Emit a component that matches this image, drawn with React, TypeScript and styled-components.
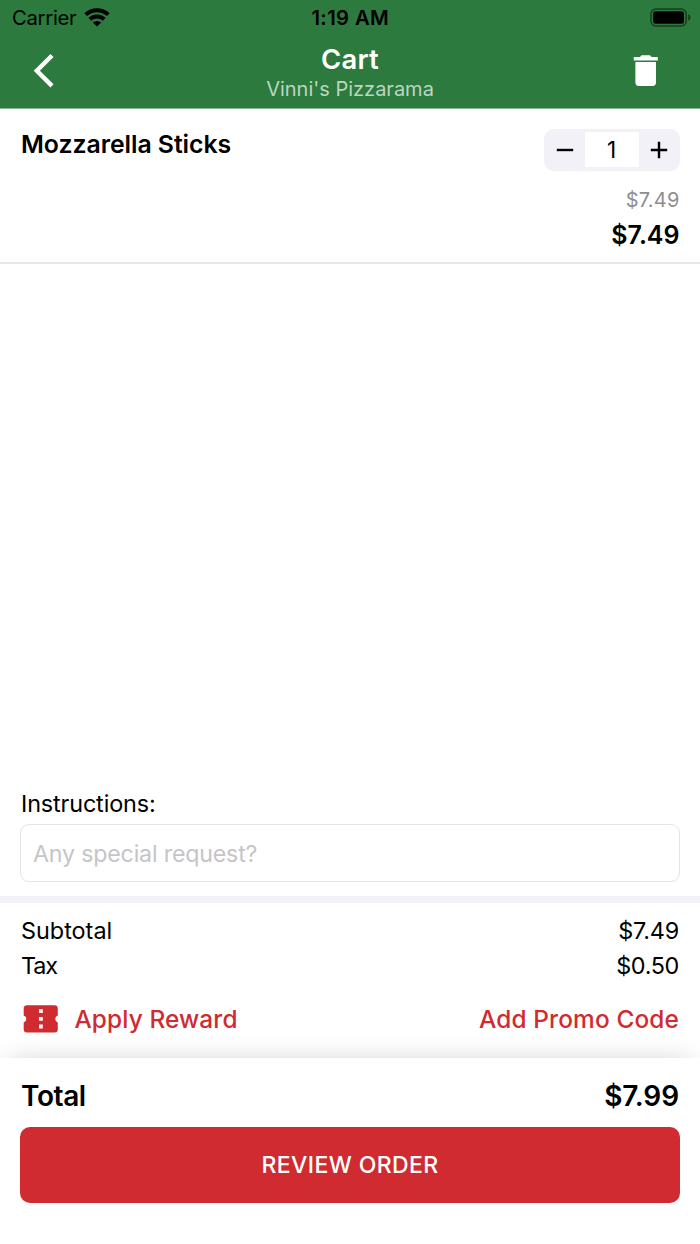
import React from "react";
import styled, { createGlobalStyle } from "styled-components";

const GlobalStyle = createGlobalStyle`
  * { box-sizing: border-box; }
  body {
    margin: 0;
    background: #fff;
    color: #000;
    font-family: Inter, "Liberation Sans", sans-serif;
  }
  button, input { font: inherit; color: inherit; border: 0; padding: 0; background: none; }
`;

const Screen = styled.div`
  display: flex;
  flex-direction: column;
  width: 700px;
  height: 1244px;
  overflow: hidden;
`;

const Text = styled.span<{ $size: number; $weight?: number; $spacing?: number; $color?: string; $line?: number }>`
  font-size: ${(p) => p.$size}px;
  font-weight: ${(p) => p.$weight ?? 400};
  letter-spacing: ${(p) => p.$spacing ?? 0}px;
  color: ${(p) => p.$color ?? "#000"};
  line-height: ${(p) => p.$line ?? 36}px;
  white-space: nowrap;
`;

const Header = styled.header`
  height: 109px;
  flex: none;
  background: #2c7a3d;
  border-bottom: 1px solid #8ab593;
`;

const StatusBar = styled.div`
  display: grid;
  grid-template-columns: 1fr auto 1fr;
  align-items: center;
  height: 36px;
  padding: 0 9px 0 12px;
`;

const Carrier = styled.div`
  display: flex;
  align-items: center;
  gap: 8px;
`;

const Time = styled.div`
  display: flex;
  padding-right: 2.5px;
`;

const WifiIcon = styled.svg`
  margin-bottom: 3px;
`;

const Battery = styled.div`
  display: flex;
  justify-content: flex-end;
  padding-bottom: 2px;
`;

const NavBar = styled.div`
  display: grid;
  grid-template-columns: 1fr auto 1fr;
  height: 72px;
`;

const Titles = styled.div`
  display: flex;
  flex-direction: column;
  align-items: center;
  padding-top: 5px;
`;

const IconButton = styled.button<{ $end?: boolean }>`
  display: flex;
  justify-self: ${(p) => (p.$end ? "end" : "start")};
  align-items: flex-start;
  padding: ${(p) => (p.$end ? "18px 41px 0 0" : "16px 0 0 32px")};
`;

const Item = styled.section`
  display: flex;
  justify-content: space-between;
  flex: none;
  height: 155px;
  padding: 19.7px 20.5px 0 21px;
  border-bottom: 2px solid #e8e8e9;
`;

const ItemName = styled.div`
  line-height: 0;
`;

const ItemSide = styled.div`
  display: flex;
  flex-direction: column;
  align-items: flex-end;
`;

const Stepper = styled.div`
  display: grid;
  grid-template-columns: 41px 54px 40.5px;
  height: 42px;
  margin-bottom: 11px;
  padding: 3.4px 0;
  border-radius: 10px;
  background: #f2f1f7;
`;

const StepButton = styled.button`
  display: flex;
  align-items: center;
  justify-content: center;
`;

const Count = styled.div`
  display: flex;
  align-items: center;
  justify-content: center;
  padding-right: 1px;
  background: #fff;
`;

const Instructions = styled.section`
  display: flex;
  flex-direction: column;
  flex: none;
  margin-top: auto;
  padding: 0 20px 13.5px;
  border-bottom: 7px solid #f2f1f7;
`;

const Label = styled.label`
  display: flex;
  padding-left: 1px;
`;

const Request = styled.input`
  height: 58px;
  margin-top: 2px;
  padding: 2px 12px 0;
  border: 1.5px solid #e4e4e6;
  border-radius: 9px;
  font-size: 23.2px;
  letter-spacing: -0.18px;
  outline: none;
  &::placeholder { color: #c5c5c7; opacity: 1; }
`;

const Summary = styled.section`
  flex: none;
  height: 155px;
  padding: 10px 21px 0;
`;

const Row = styled.div<{ $gap?: number }>`
  display: flex;
  align-items: center;
  justify-content: space-between;
  margin-top: ${(p) => p.$gap ?? 0}px;
`;

const LinkButton = styled.button`
  display: flex;
  align-items: center;
  gap: 16.4px;
`;

const Footer = styled.footer`
  flex: none;
  height: 186.3px;
  padding: 20px 20px 0;
  background: #fff;
  box-shadow: 0 -5px 26px -10px rgba(0, 0, 0, 0.22);
`;

const TotalRow = styled(Row)`
  padding: 0 1px;
`;

const ReviewButton = styled.button`
  display: block;
  width: 100%;
  height: 75.8px;
  margin-top: 13.5px;
  border-radius: 10px;
  background: #cf2b30;
`;

const red = "#cf2b30";

export default function App() {
  return (
    <Screen>
      <GlobalStyle />
      <Header>
        <StatusBar>
          <Carrier>
            <Text $size={20.3} $spacing={-0.3}>Carrier</Text>
            <WifiIcon width="26" height="20" viewBox="0 0 26 20">
              <g fill="none" stroke="#000" strokeWidth="4">
                <path d="M1.7 7.6 A16.7 16.7 0 0 1 24.3 7.6" />
                <path d="M5.8 12.2 A10.6 10.6 0 0 1 20.2 12.2" />
              </g>
              <path d="M13 19.4 L8.8 15.5 A6.4 6.4 0 0 1 17.2 15.5 Z" />
            </WifiIcon>
          </Carrier>
          <Time><Text $size={20.3} $weight={600} $spacing={0.35}>1:19 AM</Text></Time>
          <Battery>
            <svg width="41" height="19" viewBox="0 0 41 19">
              <rect x="1" y="1" width="35.2" height="17" rx="5" fill="none" stroke="#000" strokeOpacity=".5" strokeWidth="1.5" />
              <rect x="3.2" y="3.2" width="30.8" height="12.6" rx="2.4" />
              <path d="M38.2 6.3 C41.2 7.4 41.2 11.6 38.2 12.7 Z" fillOpacity=".5" />
            </svg>
          </Battery>
        </StatusBar>
        <NavBar>
          <IconButton aria-label="Back">
            <svg width="24" height="38" viewBox="0 0 24 38" fill="none" stroke="#fff" strokeWidth="4.4">
              <path d="M20 3.5 L4.8 18.7 L20 33.9" />
            </svg>
          </IconButton>
          <Titles>
            <Text $size={27.4} $weight={600} $spacing={0.3} $color="#fff">Cart</Text>
            <Text $size={20} $color="#bbd6c0" $line={24}>Vinni's Pizzarama</Text>
          </Titles>
          <IconButton $end aria-label="Empty cart">
            <svg width="26" height="33" viewBox="0 0 26 33" fill="#fff">
              <path d="M0.8 3 H7 L8.6 1.2 H17 L18.6 3 H24.8 V6.6 H0.8 Z" />
              <path d="M2.4 8 H23 V28.6 Q23 32 19.6 32 H5.8 Q2.4 32 2.4 28.6 Z" />
            </svg>
          </IconButton>
        </NavBar>
      </Header>

      <Item>
        <ItemName>
          <Text $size={24.8} $weight={600} $spacing={-0.04} $line={31}>Mozzarella Sticks</Text>
        </ItemName>
        <ItemSide>
          <Stepper>
            <StepButton aria-label="Remove one">
              <svg width="18" height="18" viewBox="0 0 18 18" stroke="#000" strokeWidth="2.4">
                <path d="M0.8 9 H17.2" />
              </svg>
            </StepButton>
            <Count><Text $size={22.6} $line={34}>1</Text></Count>
            <StepButton aria-label="Add one">
              <svg width="18" height="18" viewBox="0 0 18 18" stroke="#000" strokeWidth="2.4">
                <path d="M0.8 9 H17.2 M9 0.8 V17.2" />
              </svg>
            </StepButton>
          </Stepper>
          <Text $size={20} $spacing={0.2} $color="#8e8e90">$7.49</Text>
          <Text $size={25} $weight={600} $line={34}>$7.49</Text>
        </ItemSide>
      </Item>

      <Instructions>
        <Label><Text $size={23.4} $spacing={-0.14}>Instructions:</Text></Label>
        <Request placeholder="Any special request?" />
      </Instructions>

      <Summary>
        <Row>
          <Text $size={23.4}>Subtotal</Text>
          <Text $size={23.4} $spacing={-0.2}>$7.49</Text>
        </Row>
        <Row>
          <Text $size={23.4} $spacing={-1.1} $line={34}>Tax</Text>
          <Text $size={23.4} $spacing={-0.35} $line={34}>$0.50</Text>
        </Row>
        <Row $gap={18.6}>
          <LinkButton>
            <svg width="37" height="28" viewBox="0 0 37 28">
              <path fill={red} d="M6 0.2 H33.5 Q36.8 0.2 36.8 3.6 V10.4 A3.8 3.8 0 0 0 36.8 17.6 V24.3 Q36.8 27.6 33.5 27.6 H6 Q2.7 27.6 2.7 24.3 V17.6 A3.8 3.8 0 0 0 2.7 10.4 V3.6 Q2.7 0.2 6 0.2 Z" />
              <path fill="#fff" d="M18 4.2 h3.8 v3.9 h-3.8 Z M18 11.9 h3.8 v3.9 h-3.8 Z M18 19.6 h3.8 v3.9 h-3.8 Z" />
            </svg>
            <Text $size={24.4} $weight={500} $spacing={0.12} $color={red}>Apply Reward</Text>
          </LinkButton>
          <LinkButton>
            <Text $size={24.4} $weight={500} $spacing={0.14} $color={red}>Add Promo Code</Text>
          </LinkButton>
        </Row>
      </Summary>

      <Footer>
        <TotalRow>
          <Text $size={28} $weight={600} $spacing={-0.4}>Total</Text>
          <Text $size={28} $weight={600} $spacing={-0.1}>$7.99</Text>
        </TotalRow>
        <ReviewButton>
          <Text $size={23} $weight={500} $spacing={0.4} $color="#fff">REVIEW ORDER</Text>
        </ReviewButton>
      </Footer>
    </Screen>
  );
}
